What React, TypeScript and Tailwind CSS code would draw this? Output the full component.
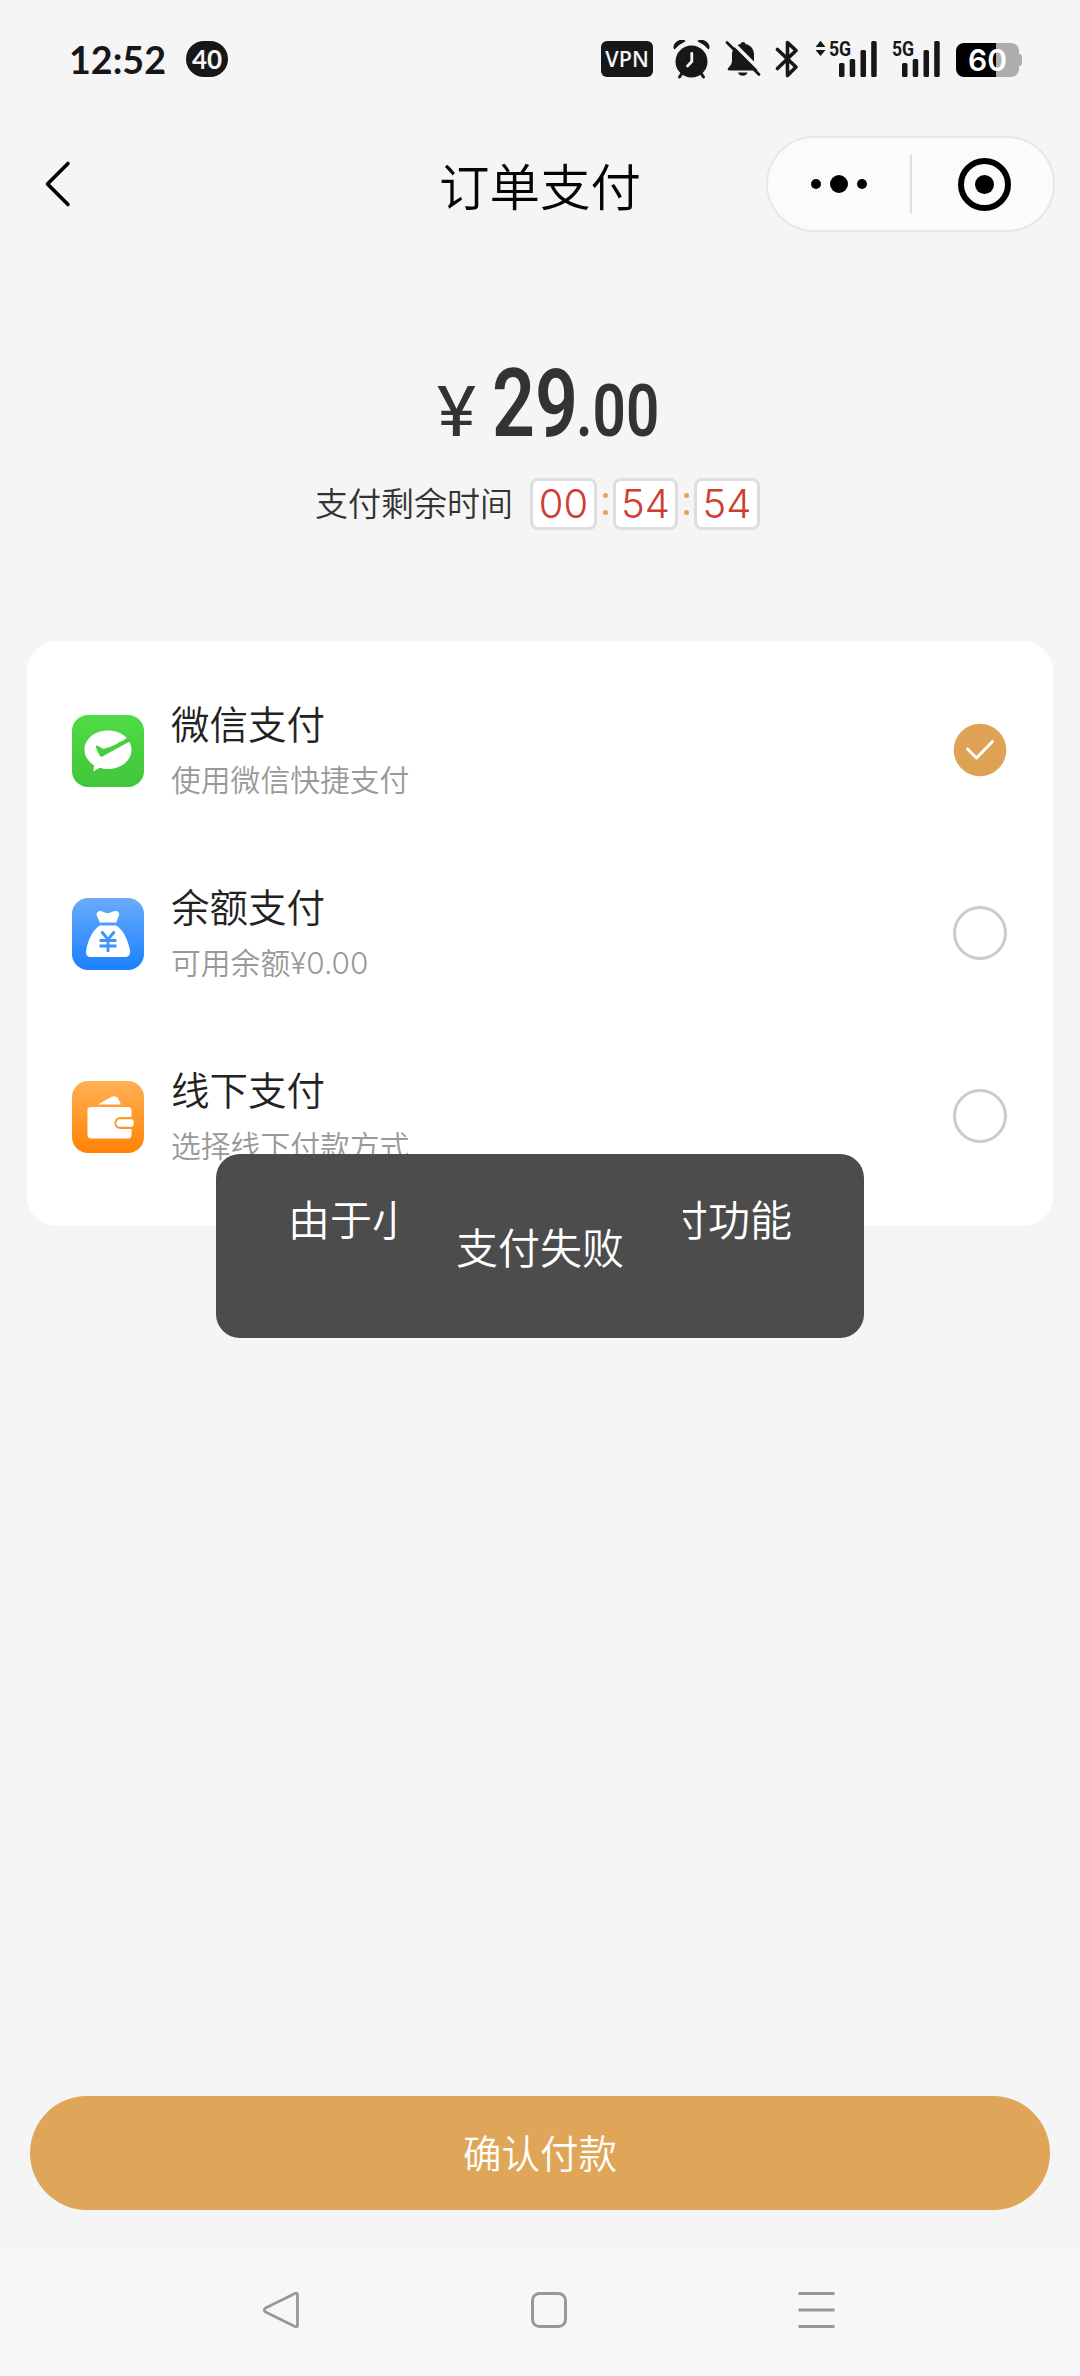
import type { ReactNode } from "react";

const INK = "#171717";

function AlarmIcon() {
  return (
    <svg width="38" height="40" viewBox="0 0 38 40" fill="none">
      <circle cx="18.5" cy="21.5" r="16" fill={INK} />
      <path d="M1.500 8.500 C0 4 6 -1 11.500 1 C8 2.500 4 5.500 1.500 8.500 Z" fill={INK} stroke={INK} strokeWidth="1.500" strokeLinejoin="round" />
      <path d="M35.500 8.500 C37 4 31 -1 25.500 1 C29 2.500 33 5.500 35.500 8.500 Z" fill={INK} stroke={INK} strokeWidth="1.500" strokeLinejoin="round" />
      <path d="M8.500 34 L6.500 37 M28.500 34 L30.500 37" stroke={INK} strokeWidth="3" strokeLinecap="round" />
      <path d="M18.800 13.500 V21.500 L14.500 26" stroke="#f5f5f5" strokeWidth="2.800" strokeLinecap="round" strokeLinejoin="round" />
    </svg>
  );
}

function MutedBellIcon() {
  return (
    <svg width="36" height="38" viewBox="0 0 36 38" fill="none">
      <path
        d="M18 2 C19.500 2 20.300 2.900 20.500 4 C26 5.200 29 9.500 29 14.500 V21 C29 24 31 26.200 32.500 28 C33.500 29.300 33 30.500 31.500 30.500 H4.500 C2.600 30.500 2.200 29.200 3.200 28 C5 26.200 7 24 7 21 V14.500 C7 9.500 10 5.200 15.500 4 C15.700 2.900 16.500 2 18 2 Z"
        fill={INK}
      />
      <path d="M13 32.500 H22.500 C21.800 34.800 20 35.800 17.800 35.800 C15.500 35.800 13.700 34.800 13 32.500 Z" fill={INK} />
      <path d="M4.500 -.5 L37 32" stroke="#f5f5f5" strokeWidth="3.600" />
      <path d="M2 2.500 L34 34.500" stroke={INK} strokeWidth="2.800" strokeLinecap="round" />
    </svg>
  );
}

function BluetoothIcon() {
  return (
    <svg width="24" height="38" viewBox="0 0 24 38" fill="none">
      <path
        d="M2.500 9.500 L21 27 L12.500 35.500 V2.500 L21 10.500 L2.500 28.500"
        stroke={INK}
        strokeWidth="3.600"
        strokeLinecap="round"
        strokeLinejoin="round"
      />
    </svg>
  );
}

function Signal({ arrows }: { arrows?: boolean }) {
  return (
    <div className="relative h-[38px] w-[50px]">
      <svg className="h-full w-full overflow-visible" viewBox="0 0 50 38" fill={INK}>
        {arrows && <path d="M-12.500 7 L-7.500 .8 L-2.500 7 Z M-12.500 10 L-7.500 16 L-2.500 10 Z" />}
        <rect x="11" y="23" width="5.500" height="14" rx="1.500" />
        <rect x="21.700" y="19" width="5.500" height="18" rx="1.500" />
        <rect x="32.500" y="10" width="5.500" height="27" rx="1.500" />
        <rect x="43.200" y="1" width="5.500" height="36" rx="1.500" />
      </svg>
      <span className="absolute -top-px left-px origin-left scale-x-[0.84] font-['Roboto'] text-[21px] leading-5 font-bold">
        5G
      </span>
    </div>
  );
}

function StatusBar() {
  return (
    <div className="flex h-[118px] items-start pt-10 pl-[69px] text-[#171717]">
      <span className="w-[117px] font-['Lato'] text-[39px] leading-[38px] font-bold">
        <span className="inline-block origin-left scale-x-[0.965]">12:52</span>
      </span>
      <div className="mt-px flex h-9 w-[42px] items-center justify-center rounded-full bg-[#171717] font-['Lato'] text-[26px] leading-none font-bold text-[#f5f5f5]">
        40
      </div>
      <div className="mt-px ml-[373px] flex h-9 w-[52px] items-center justify-center rounded-md bg-[#171717] font-['Open_Sans'] text-[21.500px] leading-none font-semibold text-[#f5f5f5]">
        VPN
      </div>
      <div className="ml-5">
        <AlarmIcon />
      </div>
      <div className="ml-[14px]">
        <MutedBellIcon />
      </div>
      <div className="ml-[14px]">
        <BluetoothIcon />
      </div>
      <div className="ml-[29px]">
        <Signal arrows />
      </div>
      <div className="ml-[13px]">
        <Signal />
      </div>
      <div className="mt-[3px] ml-[15px] flex items-center">
        <div className="flex h-[34px] w-[63px] items-center justify-center rounded-lg bg-linear-to-r from-black from-[64%] to-[#adadad] to-[64%] font-['Inter'] text-[30px] leading-none font-semibold text-white">
          60
        </div>
        <div className="h-3 w-[3px] rounded-r bg-[#adadad]" />
      </div>
    </div>
  );
}

function Header() {
  return (
    <header className="grid h-[132px] grid-cols-[1fr_auto_1fr] items-center pr-[25px] pl-[25px]">
      <svg width="48" height="48" viewBox="-17 0 48 48" fill="none">
        <path d="M26 3.500 L5.500 24 L26 44.500" stroke="#000" strokeWidth="3.600" strokeLinecap="round" strokeLinejoin="round" />
      </svg>
      <h1 className="text-[50.500px] leading-none font-[350] text-[#050505]">订单支付</h1>
      <div className="flex h-24 w-[289px] items-center justify-self-end rounded-full border-2 border-[#e7e7e7] bg-[#fbfbfb]">
        <div className="flex h-[58px] w-[144px] items-center justify-center gap-[9px] border-r-2 border-[#dedede]">
          <i className="size-[10px] rounded-full bg-black" />
          <i className="size-[18px] rounded-full bg-black" />
          <i className="size-[10px] rounded-full bg-black" />
        </div>
        <div className="ml-[46px] flex size-[53px] items-center justify-center rounded-full border-[6px] border-black">
          <i className="size-[19px] rounded-full bg-black" />
        </div>
      </div>
    </header>
  );
}

function TimeBox({ children, w }: { children: ReactNode; w: string }) {
  return (
    <span
      className={`flex h-[52px] items-center justify-center rounded-lg border-[3px] border-[#dedede] bg-white font-['Inter'] text-[40px] leading-none font-[350] text-[#cf3c30] ${w}`}
    >
      {children}
    </span>
  );
}

function Colon() {
  return (
    <span className="flex w-4 flex-col items-center gap-3">
      <i className="size-[5px] rounded-full bg-[#dfa558]" />
      <i className="size-[5px] rounded-full bg-[#dfa558]" />
    </span>
  );
}

function Amount() {
  return (
    <section className="h-[391px] pt-[110px] text-[#333]">
      <div className="flex h-[88px] items-baseline pl-[437px] font-['Roboto'] leading-[88px]">
        <span className="w-[55px]">
          <span className="inline-block origin-left scale-x-[1.06] text-[70px]">¥</span>
        </span>
        <span className="w-[84px]">
          <span className="inline-block origin-left scale-x-[0.8] text-[94px] font-semibold">29</span>
        </span>
        <span>
          <span className="inline-block origin-left scale-x-[0.8] text-[73px] font-semibold">.00</span>
        </span>
      </div>
      <div className="mt-[30px] flex h-[52px] items-center pl-[315px]">
        <span className="w-[215px] pb-[3px] text-[33px] leading-none font-[350]">支付剩余时间</span>
        <TimeBox w="w-[67px]">00</TimeBox>
        <Colon />
        <TimeBox w="w-[65px]">54</TimeBox>
        <Colon />
        <TimeBox w="w-[66px]">54</TimeBox>
      </div>
    </section>
  );
}

function WechatPayIcon() {
  return (
    <svg width="72" height="72" viewBox="0 0 72 72">
      <defs>
        <linearGradient id="green" x1="0" y1="0" x2="0" y2="1">
          <stop stopColor="#4fdc46" />
          <stop offset="1" stopColor="#41c53b" />
        </linearGradient>
      </defs>
      <rect width="72" height="72" rx="16" fill="url(#green)" />
      <path
        d="M36 15.500 C49 15.500 59.500 24 59.500 34.800 C59.500 45.600 49 54 36 54 C33 54 30.200 53.600 27.600 52.700 L21.500 56.500 L22 50.200 C16 46.600 12.500 41 12.500 34.800 C12.500 24 23 15.500 36 15.500 Z"
        fill="#fff"
      />
      <path d="M24 30.500 C26 30 29 33 31.500 34 C40 32 48 27 56 22.500 L58.500 26 L29.500 42 C28 42.500 23.500 33 24 30.500 Z" fill="#44cf3e" />
    </svg>
  );
}

function BalanceIcon() {
  return (
    <svg width="72" height="72" viewBox="0 0 72 72">
      <defs>
        <linearGradient id="blue" x1="0" y1="0" x2="0" y2="1">
          <stop stopColor="#68abfb" />
          <stop offset="1" stopColor="#1a80fe" />
        </linearGradient>
      </defs>
      <rect width="72" height="72" rx="16" fill="url(#blue)" />
      <path
        d="M26.500 13.500 C29.500 12 31.500 15.200 35.500 15.200 C39.500 15.200 42 12 45.500 13.500 C49.500 15.500 45 20.500 44.500 24.500 H27.500 C27.500 20.500 21.500 16 26.500 13.500 Z"
        fill="#fff"
      />
      <path
        d="M28 27.500 H44 C50.500 31 56 41 58 52.500 C58.500 56.500 57 59 53 59 H19 C15 59 13.500 56.500 14.200 52.500 C16 41 21.500 31 28 27.500 Z"
        fill="#fff"
      />
      <path d="M29.500 33.500 L36 41.500 L42.500 33.500 M36 41.500 V54 M27.500 42.500 H44.500 M27.500 48 H44.500" fill="none" stroke="#3f93fd" strokeWidth="2.800" />
    </svg>
  );
}

function WalletIcon() {
  return (
    <svg width="72" height="72" viewBox="0 0 72 72">
      <defs>
        <linearGradient id="orange" x1="0" y1="0" x2="0" y2="1">
          <stop stopColor="#ffb055" />
          <stop offset="1" stopColor="#ff8205" />
        </linearGradient>
      </defs>
      <rect width="72" height="72" rx="16" fill="url(#orange)" />
      <path d="M26 23.500 L39.500 15.800 C42 14.500 44.500 15.200 46 17.200 L49 23.500 Z" fill="#fff" />
      <path
        d="M19 26 H56 C58.500 26 59.500 27.500 59.500 29.500 V36 H48.500 C40.500 36 40.500 48 48.500 48 H59.500 V54 C59.500 56.500 58.500 57.500 56 57.500 H19.500 C16.500 57.500 15.500 56 15.500 54 V29.500 C15.500 27.500 16.500 26 19 26 Z"
        fill="#fff"
      />
      <path d="M48 38.200 H59.500 C62.500 38.200 62.500 45.800 59.500 45.800 H48 C43 45.800 43 38.200 48 38.200 Z" fill="#fff" />
    </svg>
  );
}

function CheckedMark() {
  return (
    <svg width="54" height="54" viewBox="0 0 54 54" fill="none">
      <circle cx="27" cy="27" r="26.300" fill="#dfa254" />
      <path d="M14.500 26 L23.500 35 L39.500 18.500" stroke="#fff" strokeWidth="3" strokeLinecap="round" strokeLinejoin="round" />
    </svg>
  );
}

const methods = [
  { title: "微信支付", note: "使用微信快捷支付", icon: <WechatPayIcon />, checked: true },
  { title: "余额支付", note: "可用余额¥0.00", icon: <BalanceIcon />, checked: false },
  { title: "线下支付", note: "选择线下付款方式", icon: <WalletIcon />, checked: false },
];

function PaymentMethods() {
  return (
    <section className="mx-[27px] h-[585px] rounded-[30px] bg-white pt-[18px]">
      {methods.map((m) => (
        <div key={m.title} className="flex h-[183px] items-center pr-[46px] pl-[45px]">
          {m.icon}
          <div className="ml-[27px] flex-1 pb-0.5">
            <p className="text-[38.500px] leading-[50px] font-[350] text-[#222]">{m.title}</p>
            <p className="mt-2.5 font-['Inter','Noto_Sans_CJK_SC',sans-serif] text-[29.800px] leading-[46px] font-[350] text-[#999]">{m.note}</p>
          </div>
          <div className="pb-0.5">
            {m.checked ? <CheckedMark /> : <i className="block size-[54px] rounded-full border-[3.500px] border-[#cbcbcb]" />}
          </div>
        </div>
      ))}
    </section>
  );
}

function Toast() {
  return (
    <div className="absolute top-[1154px] left-[216px] h-[184px] w-[648px] rounded-[24px] bg-[#4c4c4c] px-[72px] text-[42px] font-[350] whitespace-nowrap text-white">
      <div className="flex justify-between pt-[38px] leading-[52px]">
        <span className="w-[108px] overflow-hidden">由于小</span>
        <span className="flex w-[109px] justify-end overflow-hidden">付功能</span>
      </div>
      <p className="-mt-[24px] text-center leading-[52px]">支付失败</p>
    </div>
  );
}

function NavigationBar() {
  return (
    <nav className="flex h-[126px] items-center gap-[230px] bg-[#f7f6f8] pb-[6px] pl-[262px] text-[#99979a]">
      <svg width="38" height="38" viewBox="0 0 38 38" fill="none" stroke="currentColor" strokeWidth="2.800" strokeLinejoin="round">
        <path d="M33 2.500 L3.500 17 Q1 19 3.500 21 L33 35.500 Q35.500 36.500 35.500 34 V4 Q35.500 1.500 33 2.500 Z" />
      </svg>
      <svg width="38" height="38" viewBox="0 0 38 38" fill="none" stroke="currentColor" strokeWidth="3">
        <rect x="2.500" y="2.500" width="33" height="33" rx="7" />
      </svg>
      <svg width="38" height="38" viewBox="0 0 38 38" stroke="currentColor" strokeWidth="3">
        <path d="M.5 2.500 H36.500 M.5 19 H36.500 M.5 35.500 H36.500" />
      </svg>
    </nav>
  );
}

export default function App() {
  return (
    <div className="relative flex h-[2376px] w-[1080px] flex-col overflow-hidden bg-[#f5f5f5] font-['Noto_Sans_CJK_SC',sans-serif]">
      <StatusBar />
      <Header />
      <Amount />
      <PaymentMethods />
      <Toast />
      <div className="mt-auto px-[30px] pb-10">
        <button className="block h-[114px] w-full rounded-full bg-[#dfa558] pb-1 text-[38.500px] leading-none font-[350] text-[#fffdf8]">确认付款</button>
      </div>
      <NavigationBar />
    </div>
  );
}
